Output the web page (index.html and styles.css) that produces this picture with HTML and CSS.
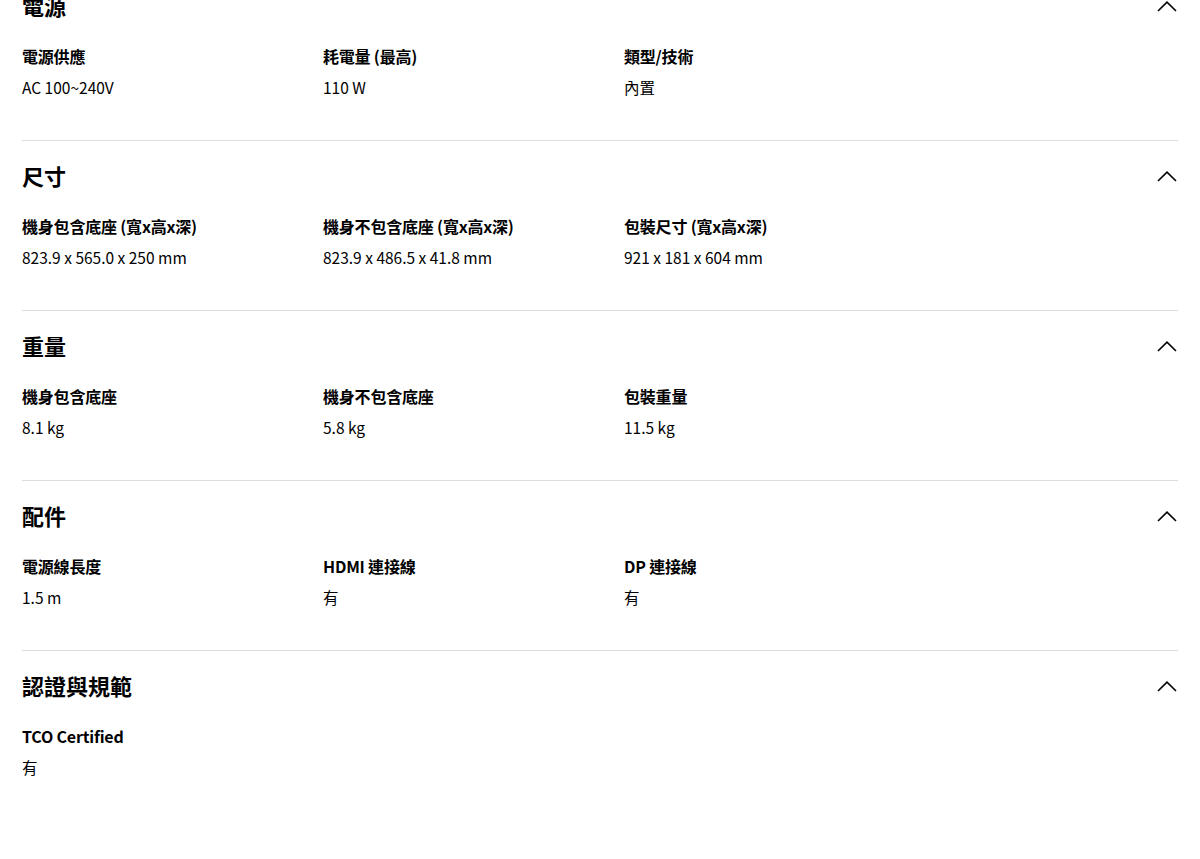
FILE: index.html
```html
<!DOCTYPE html>
<html lang="zh-Hant">
<head>
<meta charset="utf-8">
<title>規格</title>
<link rel="stylesheet" href="styles.css">
</head>
<body>
<main class="specs">
  <section class="spec-section">
    <div class="spec-head">
      <h2 class="spec-title">電源</h2>
      <svg class="chev" viewBox="0 0 20 11" width="20" height="11"><path d="M1 10 L10 1.2 L19 10" fill="none" stroke="#000" stroke-width="1.6"/></svg>
    </div>
    <div class="spec-grid">
      <div class="spec-item"><div class="label">電源供應</div><div class="value">AC 100~240V</div></div>
      <div class="spec-item"><div class="label">耗電量 (最高)</div><div class="value">110 W</div></div>
      <div class="spec-item"><div class="label">類型/技術</div><div class="value">內置</div></div>
    </div>
  </section>
  <section class="spec-section">
    <div class="spec-head">
      <h2 class="spec-title">尺寸</h2>
      <svg class="chev" viewBox="0 0 20 11" width="20" height="11"><path d="M1 10 L10 1.2 L19 10" fill="none" stroke="#000" stroke-width="1.6"/></svg>
    </div>
    <div class="spec-grid">
      <div class="spec-item"><div class="label">機身包含底座 (寬x高x深)</div><div class="value">823.9 x 565.0 x 250 mm</div></div>
      <div class="spec-item"><div class="label">機身不包含底座 (寬x高x深)</div><div class="value">823.9 x 486.5 x 41.8 mm</div></div>
      <div class="spec-item"><div class="label">包裝尺寸 (寬x高x深)</div><div class="value">921 x 181 x 604 mm</div></div>
    </div>
  </section>
  <section class="spec-section">
    <div class="spec-head">
      <h2 class="spec-title">重量</h2>
      <svg class="chev" viewBox="0 0 20 11" width="20" height="11"><path d="M1 10 L10 1.2 L19 10" fill="none" stroke="#000" stroke-width="1.6"/></svg>
    </div>
    <div class="spec-grid">
      <div class="spec-item"><div class="label">機身包含底座</div><div class="value">8.1 kg</div></div>
      <div class="spec-item"><div class="label">機身不包含底座</div><div class="value">5.8 kg</div></div>
      <div class="spec-item"><div class="label">包裝重量</div><div class="value">11.5 kg</div></div>
    </div>
  </section>
  <section class="spec-section">
    <div class="spec-head">
      <h2 class="spec-title">配件</h2>
      <svg class="chev" viewBox="0 0 20 11" width="20" height="11"><path d="M1 10 L10 1.2 L19 10" fill="none" stroke="#000" stroke-width="1.6"/></svg>
    </div>
    <div class="spec-grid">
      <div class="spec-item"><div class="label">電源線長度</div><div class="value">1.5 m</div></div>
      <div class="spec-item"><div class="label">HDMI 連接線</div><div class="value">有</div></div>
      <div class="spec-item"><div class="label">DP 連接線</div><div class="value">有</div></div>
    </div>
  </section>
  <section class="spec-section">
    <div class="spec-head">
      <h2 class="spec-title">認證與規範</h2>
      <svg class="chev" viewBox="0 0 20 11" width="20" height="11"><path d="M1 10 L10 1.2 L19 10" fill="none" stroke="#000" stroke-width="1.6"/></svg>
    </div>
    <div class="spec-grid">
      <div class="spec-item"><div class="label">TCO Certified</div><div class="value">有</div></div>
    </div>
  </section>
</main>
</body>
</html>
```
FILE: styles.css
```css
html, body {
  margin: 0;
  padding: 0;
  background: #fff;
  overflow: hidden;
}
body {
  font-family: "Noto Sans CJK TC", "Noto Sans", sans-serif;
  color: #000;
}
.specs {
  margin: -30px 22px 0 22px;
}
.spec-section {
  border-top: 1px solid #dddddd;
  padding: 20px 0 43px 0;
}
.spec-head {
  display: flex;
  justify-content: space-between;
  align-items: center;
  height: 28px;
}
.spec-title {
  margin: 0;
  font-size: 22px;
  line-height: 28px;
  font-weight: 700;
}
.chev {
  display: block;
  margin-right: 1px;
  margin-top: 2px;
}
.spec-grid {
  display: grid;
  grid-template-columns: 301px 301px 301px;
  margin-top: 27px;
}
.label {
  font-size: 16px;
  line-height: 20px;
  font-weight: 600;
  letter-spacing: -0.2px;
}
.value {
  margin-top: 11px;
  font-size: 15.5px;
  line-height: 20px;
  font-weight: 400;
}
```
